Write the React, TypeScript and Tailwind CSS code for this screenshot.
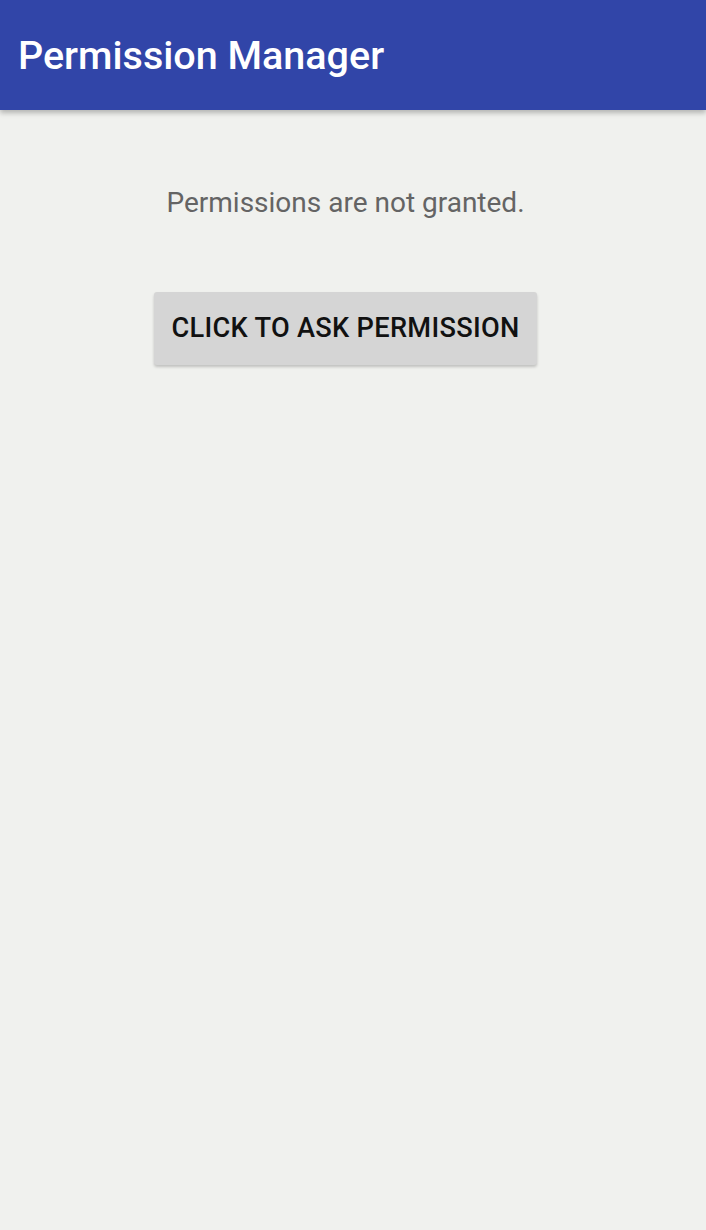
export default function App() {
  return (
    <div className="w-[706px] h-[1230px] bg-[#f0f1ee] flex flex-col" style={{ fontFamily: "Roboto, 'Noto Sans', sans-serif" }}>
      <div className="h-[110px] bg-[#3145a8] flex items-center pl-[18px] pt-[2px] shadow-[0_3px_5px_rgba(0,0,0,0.25)] relative z-10">
        <span className="text-white text-[39.5px] font-medium">Permission Manager</span>
      </div>
      <div className="flex flex-col items-center pt-[74px] pr-[15px]">
        <span className="text-[#646464] text-[28px] leading-[38px]">Permissions are not granted.</span>
        <button className="mt-[70px] w-[383px] h-[73px] rounded-[3px] bg-[#d5d5d5] shadow-[0_2px_3px_rgba(0,0,0,0.2)] text-[#111] text-[27.2px] font-medium tracking-[0.3px]">
          CLICK TO ASK PERMISSION
        </button>
      </div>
    </div>
  );
}
